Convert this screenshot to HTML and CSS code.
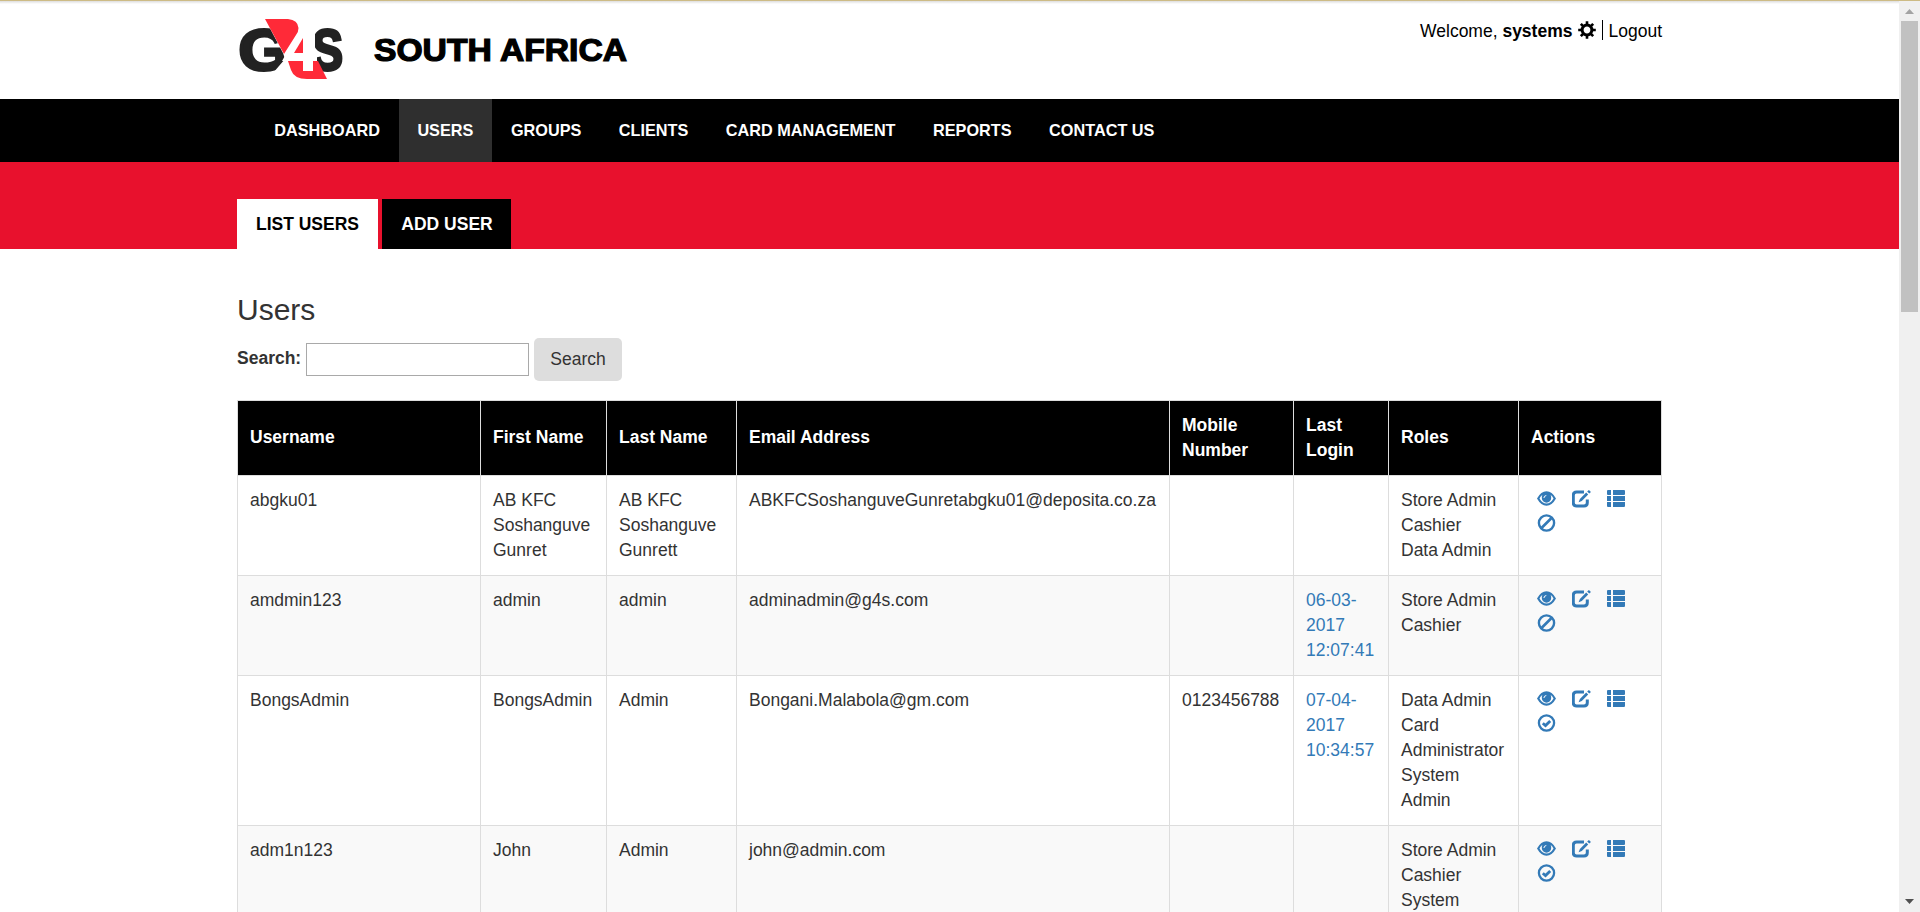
FILE: index.html
```html
<!DOCTYPE html>
<html lang="en">
<head>
<meta charset="utf-8">
<title>Users</title>
<link rel="stylesheet" href="styles.css">
</head>
<body>
<svg class="defs" aria-hidden="true">
  <symbol id="eye" viewBox="0 0 19 18"><path fill="#337ab7" fill-rule="evenodd" d="M0 8.500Q4 1.300 9.500 1.300T19 8.500Q15 15.700 9.500 15.700T0 8.500ZM2.500 8.500Q5.300 13.500 9.500 13.500T16.500 8.500Q15.300 6 13.500 4.800Q14.400 6.300 14.200 8A4.700 4.700 0 0 1 4.800 8Q4.600 6.300 5.500 4.800Q3.700 6 2.500 8.500Z"/><path d="M9.300 5.500Q7 5.700 6.900 8" fill="none" stroke="#fff" stroke-width="1"/></symbol>
  <symbol id="edit" viewBox="0 0 19 18"><path d="M12 2H4.600Q1.300 2 1.300 5.300V12.700Q1.300 16 4.600 16H12Q15.300 16 15.300 12.700V9.500" fill="none" stroke="#337ab7" stroke-width="3"/><path fill="#337ab7" d="M14.200 2.600L16.200 4.600L9.800 11L6.600 12.300L7.900 9ZM15.200 1.600L16.500 .3Q17 0 17.500 .4L18.500 1.400Q18.900 1.900 18.500 2.400L17.200 3.600Z"/></symbol>
  <symbol id="list" viewBox="0 0 19 18"><path fill="#337ab7" d="M1 0H4V5H1Q0 5 0 4V1Q0 0 1 0ZM6 0H17Q18 0 18 1V4Q18 5 17 5H6ZM0 6H4V11H0ZM6 6H18V11H6ZM0 12H4V17H1Q0 17 0 16ZM6 12H18V16Q18 17 17 17H6Z"/></symbol>
  <symbol id="ban" viewBox="0 0 19 18"><circle cx="9.500" cy="9" r="7.600" fill="none" stroke="#337ab7" stroke-width="2.400"/><path d="M4.500 14L14.500 4" stroke="#337ab7" stroke-width="2.700"/></symbol>
  <symbol id="ok" viewBox="0 0 19 18"><circle cx="9.500" cy="9" r="7.600" fill="none" stroke="#337ab7" stroke-width="2.300"/><path d="M5.800 9.200L8.500 11.600L13.200 6.900" fill="none" stroke="#337ab7" stroke-width="2.800"/></symbol>
</svg>
<div class="window">
  <div class="page">
    <header class="top">
      <svg class="logo" width="400" height="72" viewBox="236 12 400 72">
        <text class="mark" x="238.500" y="69.500" font-size="57" textLength="51" lengthAdjust="spacingAndGlyphs">G</text>
        <text class="mark" x="312" y="69.500" font-size="57" textLength="31" lengthAdjust="spacingAndGlyphs">S</text>
        <path fill="#fff" d="M264 17L283 53L285 59L279 66L273 73H303L315 50V26H298Z"/>
        <path fill="#ff2a38" d="M265 19H288Q298 20 298.500 28Q298.500 32 296 35L284 54Z"/>
        <path fill="#ff2a38" d="M288 61H318L327 79H307Q294 79 291 70Z"/>
        <path fill="#fff" fill-rule="evenodd" d="M298 33H313V53H317V61H313V71H303V61H282Z"/>
        <path fill="#ff2a38" d="M303 38V53H294Z"/>
        <text class="country" x="374" y="61" textLength="253" lengthAdjust="spacingAndGlyphs">SOUTH AFRICA</text>
      </svg>
      <div class="account">Welcome, <b>systems</b>
        <svg class="gear" width="18" height="18" viewBox="-9 -9 18 18"><circle r="4.900" fill="none" stroke="#000" stroke-width="3"/><g stroke="#000" stroke-width="2.600"><path d="M0-8.800V-5.500M0 8.800V5.500M-8.800 0H-5.500M8.800 0H5.500M-6.200-6.200L-4-4M6.200 6.200L4 4M-6.200 6.200L-4 4M6.200-6.200L4-4"/></g></svg>
        <span class="bar"></span><span class="logout">Logout</span>
      </div>
    </header>
    <nav class="nav"><a>DASHBOARD</a><a class="on">USERS</a><a>GROUPS</a><a>CLIENTS</a><a>CARD MANAGEMENT</a><a>REPORTS</a><a>CONTACT US</a></nav>
    <div class="tabs"><a class="tab current">LIST USERS</a><a class="tab">ADD USER</a></div>
    <main class="content">
      <h1>Users</h1>
      <form class="search"><label for="q">Search:</label><input id="q" type="text"><button type="button">Search</button></form>
      <table>
        <colgroup><col class="c1"><col class="c2"><col class="c3"><col class="c4"><col class="c5"><col class="c6"><col class="c7"><col class="c8"></colgroup>
        <thead><tr><th>Username</th><th>First Name</th><th>Last Name</th><th>Email Address</th><th class="two">Mobile<br>Number</th><th class="two">Last<br>Login</th><th>Roles</th><th>Actions</th></tr></thead>
        <tbody>
          <tr><td>abgku01</td><td>AB KFC<br>Soshanguve<br>Gunret</td><td>AB KFC<br>Soshanguve<br>Gunrett</td><td>ABKFCSoshanguveGunretabgku01@deposita.co.za</td><td></td><td></td><td>Store Admin<br>Cashier<br>Data Admin</td><td><div class="actions"><svg><use href="#eye"/></svg><svg><use href="#edit"/></svg><svg><use href="#list"/></svg><svg><use href="#ban"/></svg></div></td></tr>
          <tr><td>amdmin123</td><td>admin</td><td>admin</td><td>adminadmin@g4s.com</td><td></td><td><a>06-03-<br>2017<br>12:07:41</a></td><td>Store Admin<br>Cashier</td><td><div class="actions"><svg><use href="#eye"/></svg><svg><use href="#edit"/></svg><svg><use href="#list"/></svg><svg><use href="#ban"/></svg></div></td></tr>
          <tr><td>BongsAdmin</td><td>BongsAdmin</td><td>Admin</td><td>Bongani.Malabola@gm.com</td><td>0123456788</td><td><a>07-04-<br>2017<br>10:34:57</a></td><td>Data Admin<br>Card<br>Administrator<br>System<br>Admin</td><td><div class="actions"><svg><use href="#eye"/></svg><svg><use href="#edit"/></svg><svg><use href="#list"/></svg><svg><use href="#ok"/></svg></div></td></tr>
          <tr><td>adm1n123</td><td>John</td><td>Admin</td><td>john@admin.com</td><td></td><td></td><td>Store Admin<br>Cashier<br>System</td><td><div class="actions"><svg><use href="#eye"/></svg><svg><use href="#edit"/></svg><svg><use href="#list"/></svg><svg><use href="#ok"/></svg></div></td></tr>
        </tbody>
      </table>
    </main>
  </div>
  <div class="scrollbar"><svg width="9" height="5"><path fill="#a3a3a3" d="M4.500 0L9 5H0Z"/></svg><div class="thumb"></div><svg class="down" width="9" height="5"><path fill="#505050" d="M0 0H9L4.500 5Z"/></svg></div>
</div>
</body>
</html>
```
FILE: styles.css
```css
* { box-sizing: border-box; }
html, body { margin: 0; height: 912px; overflow: hidden; }
body { font: 17.5px/25px "Liberation Sans", Arial, sans-serif; color: #333; background: #fff; }
.defs { display: none; }
.window { display: flex; height: 912px; border-top: 1px solid #cdbb85; background: linear-gradient(#ddd, #fff 3px); overflow: hidden; }
.page { width: 1899px; height: 911px; overflow: hidden; }
.top { height: 98px; padding: 11px 237px 0 236px; display: flex; justify-content: space-between; color: #000; }
.mark { font-family: "Liberation Sans", Arial, sans-serif; font-weight: 700; fill: #222; stroke: #222; stroke-width: 3; }
.country { font: 700 30.5px "Liberation Sans", Arial, sans-serif; fill: #000; stroke: #000; stroke-width: 1.2; }
.account { display: flex; height: 38px; align-items: center; white-space: pre; }
.gear { margin: -3px 0 0 6px; }
.bar { width: 1px; height: 20px; background: #000; margin: -2px 5px 0 6px; }
.nav { height: 63px; background: #000; display: flex; padding-left: 255.5px; }
.nav a { padding: 0 18.75px; font-size: 16.25px; font-weight: 700; line-height: 63px; color: #fff; }
.nav .on { background: #2f2f2f; }
.tabs { height: 87px; background: #e8112d; display: flex; align-items: flex-end; gap: 4px; padding-left: 237px; }
.tab { height: 50px; line-height: 51px; background: #000; color: #fff; font-weight: 700; width: 129px; padding-left: 1px; text-align: center; }
.tab.current { background: #fff; color: #000; width: 141px; padding-left: 0; }
.content { padding: 44px 237px 0; }
h1 { font-size: 30px; line-height: 34px; font-weight: 400; margin: 0 0 11px; }
.search { display: flex; height: 43px; margin: 0 0 19px; align-items: center; }
.search label { font-weight: 700; width: 69px; margin-top: -3px; }
.search input { width: 223px; height: 33px; border: 1px solid #a9a9a9; padding: 0 4px; margin-right: 5px; }
.search button { width: 88px; height: 43px; border: 0; border-radius: 5px; background: #ddd; color: #333; font: inherit; padding: 0; }
table { width: 1425px; table-layout: fixed; border-collapse: collapse; white-space: nowrap; }
.c1 { width: 243px; } .c2 { width: 126px; } .c3 { width: 130px; } .c4 { width: 433px; }
.c5 { width: 124px; } .c6 { width: 95px; } .c7 { width: 130px; } .c8 { width: 143px; }
th, td { border: 1px solid #ddd; padding: 12px; text-align: left; vertical-align: top; }
th { background: #000; color: #fff; vertical-align: middle; padding: 11px 12px 13px; }
th.two { padding: 12px; }
tbody tr:nth-child(even) { background: #f9f9f9; }
td a { color: #337ab7; }
.actions { display: grid; grid-template-columns: 19px 19px 19px; column-gap: 16px; grid-auto-rows: 24px; padding-left: 6px; }
.actions svg { width: 19px; height: 18px; margin-top: 2px; }
.scrollbar { width: 21px; background: #f0f0f0; display: flex; flex-direction: column; align-items: center; padding: 8px 0; }
.thumb { width: 17px; height: 291px; background: #c1c1c1; margin-top: 7px; }
.down { margin-top: auto; }
```
